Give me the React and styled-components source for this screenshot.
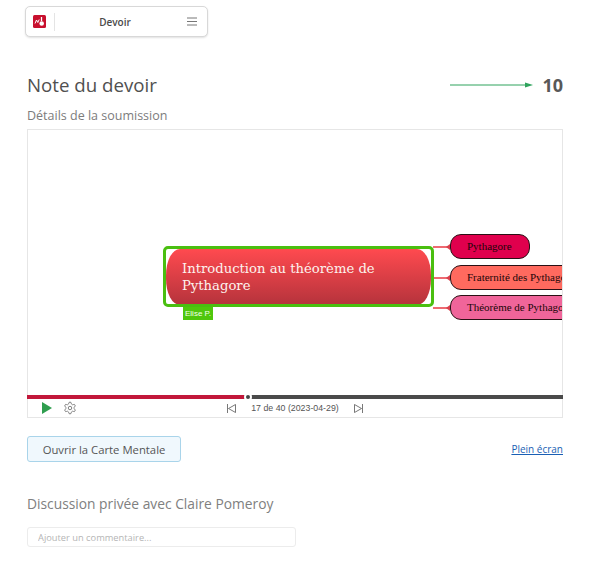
import React from "react";
import styled, { createGlobalStyle } from "styled-components";

const GlobalStyle = createGlobalStyle`
  html, body {
    margin: 0;
    padding: 0;
    background: #fff;
    font-family: "Open Sans", sans-serif;
  }
`;

const Page = styled.div`
  width: 600px;
  height: 562px;
  overflow: hidden;
  box-sizing: border-box;
  padding: 6px 37px 0 27px;
`;

const NavBar = styled.nav`
  display: flex;
  align-items: center;
  width: 183px;
  height: 31px;
  margin-left: -2px;
  box-sizing: border-box;
  border: 1px solid #d8d8d8;
  border-radius: 5px;
  background: #fff;
  box-shadow: 0 1px 2px rgba(0, 0, 0, 0.12);
`;

const NavLogo = styled.div`
  display: flex;
  align-items: center;
  height: 18px;
  padding: 0 8px 0 7px;
  border-right: 1px solid #e4e4e4;
`;

const NavTitle = styled.div`
  flex: 1;
  padding-right: 12px;
  text-align: center;
  font-size: 10px;
  font-weight: 600;
  color: #4a4a4a;
`;

const NavMenu = styled.div`
  display: flex;
  margin-right: 10px;
`;

const GradeRow = styled.div`
  display: flex;
  align-items: center;
  justify-content: space-between;
  margin-top: 34px;
  height: 27px;
`;

const Heading = styled.h1`
  margin: 0;
  font-size: 18.7px;
  font-weight: 400;
  color: #505050;
`;

const GradeValue = styled.div`
  display: flex;
  align-items: center;
  gap: 9px;
  font-size: 18px;
  font-weight: 700;
  color: #585858;
`;

const SubHeading = styled.h2`
  margin: 9px 0 0;
  font-size: 12.5px;
  line-height: 17px;
  font-weight: 400;
  color: #7c7c7c;
`;

const Player = styled.section`
  width: 536px;
  height: 289px;
  margin-top: 5px;
  box-sizing: border-box;
  border: 1px solid #e6e6e6;
  display: flex;
  flex-direction: column;
`;

const Canvas = styled.div`
  position: relative;
  flex: 1;
  overflow: hidden;
  background: #fff;
`;

const RootNode = styled.div`
  position: absolute;
  left: 138px;
  top: 119px;
  width: 265px;
  height: 56px;
  box-sizing: border-box;
  padding: 11px 16px;
  border-radius: 14px / 26px;
  background: linear-gradient(#ff4a4f, #b5333c);
  color: #fdf3ee;
  font-family: "DejaVu Serif", serif;
  font-size: 13.2px;
  line-height: 17px;
`;

const Selection = styled.div`
  position: absolute;
  left: 135px;
  top: 116px;
  width: 271px;
  height: 61px;
  box-sizing: border-box;
  border: 3px solid #4abf10;
  border-radius: 5px;
`;

const UserTag = styled.div`
  position: absolute;
  left: 155px;
  top: 177px;
  padding: 0 2px;
  height: 13px;
  line-height: 13px;
  background: #4fc70c;
  color: #f2ffe9;
  font-family: "Liberation Sans", sans-serif;
  font-size: 8px;
`;

const Connector = styled.div`
  position: absolute;
  left: 405px;
  top: ${(p) => p.$top}px;
  width: 17px;
  height: 2px;
  background: #ee6a72;

  &::after {
    content: "";
    position: absolute;
    right: 0;
    top: -2px;
    border-style: solid;
    border-width: 3px 4px 3px 0;
    border-color: transparent #d8404c transparent transparent;
  }
`;

const ChildNode = styled.div`
  position: absolute;
  left: 422px;
  top: ${(p) => p.$top}px;
  width: ${(p) => p.$width}px;
  height: 25px;
  box-sizing: border-box;
  padding-left: 16px;
  border: 1px solid #2a1014;
  border-radius: 11px;
  background: ${(p) => p.$color};
  color: #1a0508;
  font-family: "Liberation Serif", serif;
  font-size: 11px;
  line-height: 23px;
  white-space: nowrap;
`;

const Progress = styled.div`
  display: flex;
  align-items: center;
  position: relative;
  height: 4px;
  margin: 0 -1px;
  background: #4a4a4a;
`;

const ProgressFill = styled.div`
  height: 4px;
  background: #c2173a;
`;

const ProgressThumb = styled.div`
  position: absolute;
  top: -2px;
  width: 8px;
  height: 8px;
  box-sizing: border-box;
  border: 2px solid #fff;
  border-radius: 50%;
  background: #444;
`;

const Controls = styled.div`
  display: grid;
  grid-template-columns: 1fr auto 1fr;
  align-items: center;
  height: 18px;
  padding: 0 14px;
`;

const ControlGroup = styled.div`
  display: flex;
  align-items: center;
  gap: ${(p) => p.$gap || 0}px;
`;

const StepLabel = styled.span`
  font-family: "Liberation Sans", sans-serif;
  font-size: 8.8px;
  color: #555;
`;

const ActionRow = styled.div`
  display: flex;
  align-items: center;
  justify-content: space-between;
  margin-top: 18px;
`;

const OpenButton = styled.button`
  width: 154px;
  height: 26px;
  border: 1px solid #a9d4ea;
  border-radius: 3px;
  background: #f0f8fd;
  color: #555;
  font-family: "Open Sans", sans-serif;
  font-size: 11.3px;
  padding: 0;
`;

const FullscreenLink = styled.a`
  font-size: 10px;
  color: #1a5fb4;
  text-decoration: underline;
`;

const DiscussionTitle = styled.h3`
  margin: 32px 0 0;
  font-size: 13.8px;
  line-height: 19px;
  font-weight: 400;
  color: #808080;
`;

const CommentInput = styled.input`
  display: block;
  width: 269px;
  height: 20px;
  margin-top: 14px;
  box-sizing: border-box;
  padding: 0 10px;
  border: 1px solid #ececec;
  border-radius: 3px;
  font-family: "Open Sans", sans-serif;
  font-size: 9.3px;

  &::placeholder {
    color: #b5b5b5;
    opacity: 1;
  }
`;

const children = [
  { label: "Pythagore", top: 104, width: 80, color: "#e0004d", line: 116 },
  { label: "Fraternité des Pythagoriciens", top: 135, width: 160, color: "#ff6a5f", line: 147 },
  { label: "Théorème de Pythagore", top: 165, width: 160, color: "#f0659a", line: 177 }
];

const Logo = () => (
  <svg width="13" height="13" viewBox="0 0 13 13">
    <rect width="13" height="13" rx="1.5" fill="#c8102e" />
    <path d="M2 8.5 L3.5 5 L4.8 7.5 L6.2 4.5" fill="none" stroke="#fff" strokeWidth="1" />
    <path d="M8.5 2 L8.5 6" stroke="#fff" strokeWidth="1.3" />
    <circle cx="8.7" cy="8.5" r="2.3" fill="#fff" />
  </svg>
);

const MenuIcon = () => (
  <svg width="10" height="9" viewBox="0 0 10 9">
    <path d="M0 1 H10 M0 4.5 H10 M0 8 H10" stroke="#777" strokeWidth="1" />
  </svg>
);

const GreenArrow = () => (
  <svg width="83" height="6" viewBox="0 0 83 6">
    <path d="M0 3 H77" stroke="#2ea35c" strokeWidth="1" />
    <path d="M75 0.5 L83 3 L75 5.5 Z" fill="#2ea35c" />
  </svg>
);

const PlayIcon = () => (
  <svg width="10" height="12" viewBox="0 0 10 12">
    <path d="M0 0 L10 6 L0 12 Z" fill="#2f9e4f" />
  </svg>
);

const GearIcon = () => (
  <svg width="14" height="14" viewBox="0 0 24 24" fill="none" stroke="#666" strokeWidth="1.4">
    <path d="M12.2 2h-.4a2 2 0 0 0-2 2v.2a2 2 0 0 1-1 1.7l-.4.3a2 2 0 0 1-2 0l-.2-.1a2 2 0 0 0-2.7.7l-.2.4a2 2 0 0 0 .7 2.7l.2.1a2 2 0 0 1 1 1.7v.5a2 2 0 0 1-1 1.8l-.2.1a2 2 0 0 0-.7 2.7l.2.4a2 2 0 0 0 2.7.7l.2-.1a2 2 0 0 1 2 0l.4.3a2 2 0 0 1 1 1.7v.2a2 2 0 0 0 2 2h.4a2 2 0 0 0 2-2v-.2a2 2 0 0 1 1-1.7l.4-.3a2 2 0 0 1 2 0l.2.1a2 2 0 0 0 2.7-.7l.2-.4a2 2 0 0 0-.7-2.7l-.2-.1a2 2 0 0 1-1-1.8v-.5a2 2 0 0 1 1-1.7l.2-.1a2 2 0 0 0 .7-2.7l-.2-.4a2 2 0 0 0-2.7-.7l-.2.1a2 2 0 0 1-2 0l-.4-.3a2 2 0 0 1-1-1.7V4a2 2 0 0 0-2-2z" />
    <circle cx="12" cy="12" r="3" />
  </svg>
);

const PrevIcon = () => (
  <svg width="9" height="9" viewBox="0 0 9 9" fill="none" stroke="#555" strokeWidth="0.8">
    <path d="M0.5 0 V9 M8.5 0.5 L1.5 4.5 L8.5 8.5 Z" />
  </svg>
);

const NextIcon = () => (
  <svg width="9" height="9" viewBox="0 0 9 9" fill="none" stroke="#555" strokeWidth="0.8">
    <path d="M8.5 0 V9 M0.5 0.5 L7.5 4.5 L0.5 8.5 Z" />
  </svg>
);

export default function App() {
  return (
    <Page>
      <GlobalStyle />
      <NavBar>
        <NavLogo>
          <Logo />
        </NavLogo>
        <NavTitle>Devoir</NavTitle>
        <NavMenu>
          <MenuIcon />
        </NavMenu>
      </NavBar>

      <GradeRow>
        <Heading>Note du devoir</Heading>
        <GradeValue>
          <GreenArrow />
          10
        </GradeValue>
      </GradeRow>
      <SubHeading>Détails de la soumission</SubHeading>

      <Player>
        <Canvas>
          {children.map((c) => (
            <Connector key={c.label} $top={c.line} />
          ))}
          <RootNode>Introduction au théorème de Pythagore</RootNode>
          <Selection />
          <UserTag>Elise P.</UserTag>
          {children.map((c) => (
            <ChildNode key={c.label} $top={c.top} $width={c.width} $color={c.color}>
              {c.label}
            </ChildNode>
          ))}
        </Canvas>
        <Progress>
          <ProgressFill style={{ width: "40.5%" }} />
          <ProgressThumb style={{ left: "40.5%" }} />
        </Progress>
        <Controls>
          <ControlGroup $gap={11}>
            <PlayIcon />
            <GearIcon />
          </ControlGroup>
          <ControlGroup $gap={15}>
            <PrevIcon />
            <StepLabel>17 de 40 (2023-04-29)</StepLabel>
            <NextIcon />
          </ControlGroup>
          <span />
        </Controls>
      </Player>

      <ActionRow>
        <OpenButton>Ouvrir la Carte Mentale</OpenButton>
        <FullscreenLink href="#">Plein écran</FullscreenLink>
      </ActionRow>

      <DiscussionTitle>Discussion privée avec Claire Pomeroy</DiscussionTitle>
      <CommentInput placeholder="Ajouter un commentaire..." />
    </Page>
  );
}
